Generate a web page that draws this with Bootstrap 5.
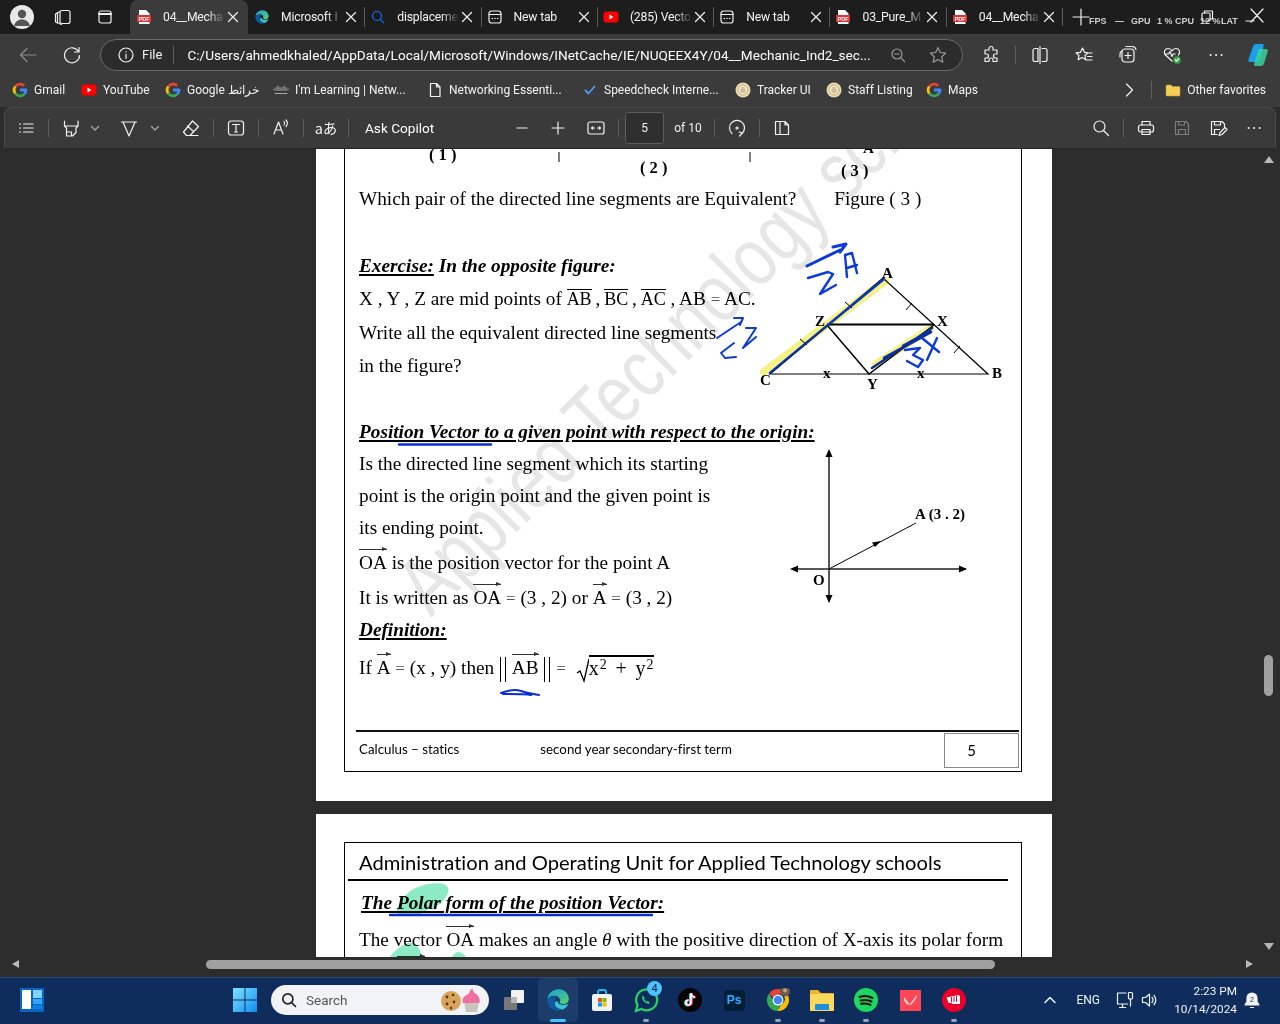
<!DOCTYPE html>
<html lang="en">
<head>
  <meta charset="UTF-8" />
  <meta name="viewport" content="width=device-width, initial-scale=1.0" />
  <title>04__Mechanic_Ind2_sec</title>
  <link rel="stylesheet" href="https://cdn.jsdelivr.net/npm/bootstrap@5.3.3/dist/css/bootstrap.min.css">
  <style>
    html, body { height: 100%; }
    body {
      width: 1280px;
      height: 1024px;
      overflow: hidden;
      background: #2d2d2d;
      color: #f2f2f2;
      font-family: Roboto, "Noto Sans", sans-serif;
      font-size: 12.5px;
    }
    .ico { display: block; fill: none; stroke: currentColor; stroke-width: 1.2; stroke-linecap: round; stroke-linejoin: round; flex: none; }
    .ico-12 { width: 12px; height: 12px; }
    .ico-16 { width: 16px; height: 16px; }
    .ico-20 { width: 20px; height: 20px; }

    /* tab strip */
    .tab-strip { height: 34px; background: #1d1d1d; }
    .strip-btn { width: 42px; display: flex; justify-content: center; }
    .avatar { width: 24px; height: 24px; border-radius: 50%; background: #e8e8e8; margin-left: 10px; margin-right: 8px; }
    .edge-tab { width: 116.3px; height: 34px; padding-left: 6px; position: relative; }
    .edge-tab.is-active { background: #3b3b3b; border-radius: 8px 8px 0 0; width: 118px; }
    .edge-tab + .edge-tab:not(.no-sep)::before { content: ""; position: absolute; left: 0; top: 7px; height: 20px; width: 1px; background: #5a5a5a; }
    .tab-title { width: 62px; margin-left: 11px; white-space: nowrap; overflow: hidden; font-size: 12.2px; letter-spacing: -.2px; -webkit-mask-image: linear-gradient(to right, #000 72%, transparent); mask-image: linear-gradient(to right, #000 72%, transparent); }
    .tab-close { margin-left: 2px; }
    .perf-overlay { position: absolute; top: 15px; left: 1089px; font-size: 9px; font-weight: 700; color: #cfcfcf; font-family: "Liberation Sans", sans-serif; white-space: nowrap; }
    .perf-overlay span { position: absolute; top: 0; }
    .perf-gpu { left: 42px; } .perf-dash { left: 26px; } .perf-one { left: 68px; }
    .perf-cpu { left: 86px; } .perf-twelve { left: 111px; } .perf-lat { left: 132px; }
    .cap-restore { left: 1199px; top: 8px; }
    .cap-close { left: 1245px; top: 6px; }

    /* address and favorites */
    .addr-row { height: 38px; background: #3b3b3b; padding-top: 4px; }
    .nav-back { width: 56px; color: #8c8c8c; }
    .nav-reload { width: 32px; }
    .addr-pill { width: 863px; height: 32px; border: 1px solid #6a6a6a; border-radius: 16px; background: #2c2c2c; margin-left: 12px; padding-left: 17px; }
    .addr-file { font-size: 13px; margin-left: 8px; }
    .addr-sep { margin: 0 13px 0 11px; }
    .addr-url { font-size: 13.6px; color: #fff; white-space: nowrap; }
    .addr-dim { color: #9a9a9a; }
    .addr-star { margin: 0 14px 0 22px; }
    .addr-ext { margin-left: 18px; }
    .addr-sep-ext { margin: 0 14px; }
    .addr-more { margin-right: 19px; }
    .vsep { width: 1px; height: 18px; background: #5f5f5f; flex: none; }
    .fav-row { height: 35px; background: #3b3b3b; padding-left: 12px; padding-right: 14px; font-size: 12px; }
    .fav-grid { display: grid; grid-template-columns: 69px 84px 108px 154px 155px 153px 91px 100px 80px; }
    .fav-item { display: flex; align-items: center; gap: 6px; white-space: nowrap; }
    .fav-sep { margin: 0 13px 0 14px; }

    /* pdf toolbar */
    .pdf-bar { height: 42px; background: #3a3a3a; border: 1px solid #4a4a4a; border-bottom: 1px solid #262626; border-radius: 8px 8px 0 0; margin: 0 4px; padding-left: 10px; font-size: 13px; }
    .tb-btn { width: 22px; display: flex; justify-content: center; flex: none; }
    .tb-chev { width: 16px; display: flex; justify-content: center; flex: none; color: #aaa; }
    .tb-sep { margin: 0 11px; }
    .m5 { margin-left: 5px; } .m7 { margin-left: 7px; } .m15 { margin-left: 15px; } .m16 { margin-left: 16px; } .m17 { margin-left: 17px; }
    .tb-aa { font-size: 14.5px; font-family: "Noto Sans CJK JP", sans-serif; white-space: nowrap; }
    .tb-ask { margin-left: 5px; font-size: 13.6px; color: #fff; white-space: nowrap; }
    .tb-minus { margin-left: 80px; }
    .tb-plus { margin-left: 20px; }
    .tb-fit { margin-left: 20px; }
    .tb-sep-page { margin: 0 6px 0 12px; }
    .page-box { width: 39px; height: 32px; background: #2f2f2f; border: 1px solid #5c5c5c; border-radius: 3px; font-size: 12px; }
    .tb-of { margin-left: 10px; font-size: 12px; white-space: nowrap; }
    .tb-sep-12 { margin: 0 12px; }
    .tb-save { margin-left: 16px; color: #7c7c7c; }
    .tb-more { margin: 0 11px 0 16px; }

    /* viewer */
    .viewer { height: 808px; position: relative; overflow: hidden; background: #2d2d2d; }
    .doc-page { width: 736px; margin-left: 316px; background: #fff; position: relative; overflow: hidden; color: #000; font-family: "Liberation Serif", "Times New Roman", serif; font-size: 19.25px; }
    .page-one { height: 652px; margin-bottom: 13px; }
    .page-two { height: 200px; padding: 28px 30px 0 28px; }
    .page-frame { position: relative; border: 1px solid #000; margin: 0 30px 0 28px; height: 623px; border-top: 0; padding-left: 14px; }
    .page-two .page-frame { margin: 0; height: 300px; border-top: 1px solid #000; }
    .watermark { position: absolute; left: 0; top: 0; }
    .fig-strip { height: 33px; display: block; margin-left: -14px; }
    .doc-text { flex: 1; min-width: 0; }
    .dl { height: 33px; line-height: 33px; white-space: nowrap; position: relative; }
    .dl-34 { height: 34px; line-height: 34px; }
    .dl-32 { height: 32px; line-height: 32px; }
    .dl-31 { height: 31px; line-height: 31px; }
    .dl-40 { height: 40px; line-height: 40px; }
    .dl-30 { height: 30px; line-height: 30px; }
    .dl-42 { height: 42px; line-height: 42px; }
    .after-gap { margin-top: 34px; }
    .after-gap-33 { margin-top: 33px; }
    .doc-head { font-weight: 700; font-style: italic; text-decoration: underline; text-decoration-thickness: 2px; text-underline-offset: 2px; }
    .doc-head-plain { font-weight: 700; font-style: italic; }
    .figure-gap { margin-left: 38px; }
    .doc-fig { display: block; overflow: visible; flex: none; }
    .over { display: inline-block; line-height: 1.05; border-top: 1px solid #000; font-size: 18px; }
    .eq { font-size: 17px; color: #555; }
    .vec { display: inline-block; position: relative; line-height: 1; }
    .vec::before { content: ""; position: absolute; left: 0; right: 0; top: -4px; border-top: 1px solid #333; }
    .vec::after { content: ""; position: absolute; right: 0; top: -6px; border-left: 5px solid #333; border-top: 2.5px solid transparent; border-bottom: 2.5px solid transparent; }
    .norm-bar { display: inline-block; width: 6px; height: 25px; border-left: 1px solid #000; border-right: 1px solid #000; vertical-align: middle; margin: 0 1px; }
    .root-sign { display: inline-block; vertical-align: middle; margin-left: 10px; }
    .root-body { display: inline-block; border-top: 2px solid #000; line-height: 1.12; letter-spacing: .9px; word-spacing: 2px; font-size: 20px; position: relative; top: 1px; }
    .root-body sup { font-size: 14px; top: -.45em; }
    .page-rule { height: 2px; background: #111; position: absolute; left: 11px; right: 2px; bottom: 39px; }
    .page-foot { height: 40px; position: absolute; left: 14px; right: 2px; bottom: 1px; font: 13.3px "Lato", sans-serif; font-variant-ligatures: none; }
    .page-foot span { margin-bottom: 2px; }
    .page-num { width: 75px; height: 35px; border: 1px solid #8a8a8a; font-size: 15px; padding-right: 20px; }
    .foot-mid { margin-left: 81px; }
    .unit-head { height: 36px; font: 20.15px/39px "Lato", sans-serif; font-variant-ligatures: none; white-space: nowrap; }
    .unit-rule { height: 2px; background: #000; margin: 0 13px 0 -11px; }
    .polar-head { font-size: 19.3px; margin-left: 2px; height: 44px; line-height: 44px; white-space: nowrap; }
    .polar-line { font-size: 19.2px; height: 30px; line-height: 30px; white-space: nowrap; }
    .polar-norm { padding-left: 25px; }

    .ink { position: absolute; left: 0; top: 0; pointer-events: none; }
    .ink-blend { mix-blend-mode: multiply; }
    .scroll-v { position: absolute; right: 4px; top: 0; bottom: 0; width: 14px; background: #2d2d2d; color: #b8b8b8; }
    .scroll-thumb-v { position: absolute; left: 2px; top: 506px; width: 9px; height: 41px; border-radius: 5px; background: #a0a0a0; }
    .scroll-up { position: absolute; left: 1px; top: 6px; }
    .scroll-down { position: absolute; left: 1px; bottom: 6px; }

    .hscroll { height: 20px; background: #2d2d2d; position: relative; border-radius: 0 0 8px 8px; margin: 0 4px; }
    .hscroll-thumb { position: absolute; left: 202px; top: 3px; width: 789px; height: 9px; border-radius: 5px; background: #a0a0a0; }
    .hs-arrow { position: absolute; top: 3px; width: 0; height: 0; border-top: 4.5px solid transparent; border-bottom: 4.5px solid transparent; }
    .hs-left { left: 8px; border-right: 7px solid #b8b8b8; }
    .hs-right { left: 1242px; border-left: 7px solid #b8b8b8; }

    /* taskbar */
    .taskbar { height: 47px; background: #0e2d5d; border-top: 1px solid #274a78; padding-bottom: 2px; position: relative; color: #f2f2f2; font-size: 12px; }
    .tray-widgets { margin-left: 20px; }
    .tray-start { margin-left: 189px; }
    .search-pill { width: 218px; height: 30px; border-radius: 15px; background: #f1f3f6; color: #555; font-size: 13.5px; margin-left: 14px; padding-left: 9px; }
    .search-ico { color: #222; stroke-width: 1.5; width: 18px; height: 18px; }
    .task-view { margin-left: 3px; }
    .task-btn { width: 44px; height: 44px; display: flex; align-items: center; justify-content: center; position: relative; flex: none; }
    .task-btn.is-open::after { content: ""; position: absolute; bottom: 0; left: 19px; width: 6px; height: 3px; border-radius: 2px; background: #9aa7b8; }
    .task-btn.is-active { background: #1c3c69; border-radius: 5px; width: 40px; margin: 0 2px; }
    .task-btn.is-active::after { content: ""; position: absolute; bottom: 0; left: 12px; width: 16px; height: 3px; border-radius: 2px; background: #4cc2ff; }
    .wa-badge { position: absolute; left: 23px; top: 3px; width: 15px; height: 15px; border-radius: 50%; background: #4cc2ff; color: #10243f; font-size: 11px; line-height: 15px; text-align: center; }
    .ps-tile { width: 21px; height: 21px; border-radius: 4px; background: #001e36; color: #31a8ff; font: 700 12px/21px "Liberation Sans", sans-serif; text-align: center; }
    .tray-eng { margin-left: 19px; }
    .tray-net { margin-left: 15px; }
    .tray-vol { margin-left: 5px; }
    .clock { text-align: right; line-height: 18px; font-size: 11.8px; width: 72px; margin-left: 5px; }
    .tray-bell { margin: 0 18px 0 5px; }
  </style>
</head>
<body>

  <svg width="0" height="0" class="position-absolute">
    <defs>
      <linearGradient id="edgeA" x1="0" y1="0" x2="1" y2="1"><stop offset="0" stop-color="#1b9de2"/><stop offset="1" stop-color="#54d36a"/></linearGradient>
      <symbol id="i-x" viewBox="0 0 12 12"><path d="M1.500 1.500l9 9M10.500 1.500l-9 9"/></symbol>
      <symbol id="i-pdf" viewBox="0 0 16 16"><path fill="#fff" stroke="none" d="M3 1h7l3.500 3.500V15H3z"/><rect x="1" y="6" width="14" height="7" fill="#e03131" stroke="none"/><text x="8" y="11.600" font-size="5.600" font-weight="700" text-anchor="middle" fill="#fff" stroke="none" font-family="Liberation Sans">PDF</text></symbol>
      <symbol id="i-edge" viewBox="0 0 24 24"><path fill="url(#edgeA)" stroke="none" d="M2 11.500C3 5.500 7.500 2 12.500 2c5.800 0 9.500 4.500 9.500 9 0 2.800-2.200 4.700-5 4.700-2 0-3.500-.7-3.500-1.600 0-.5.500-.7.500-1.600C14 9.800 11.500 8 9 8c-3.500 0-6 1.500-7 3.500z"/><path fill="#0c59a4" stroke="none" d="M2 11.500C2 17.500 6.500 22 12 22c1.800 0 3.500-.5 4.800-1.300-4 .8-8.300-1.500-8.300-6 0-2 1-3.800 2.700-4.700-.8-1-1.800-1.500-3-1.500C5 8.500 2.500 10 2 11.500z"/><path fill="#37c4d0" stroke="none" d="M9 15c0 4 4.500 6 7.800 5.700 2.500-1.400 4.200-3.300 5-5.700-1 1-2.800 1.600-4.800 1.600-3.500 0-5.500-1.600-5.500-3.600-1.500.3-2.500 1-2.500 2z"/></symbol>
      <symbol id="i-search" viewBox="0 0 16 16"><circle cx="7" cy="7" r="4.500"/><path d="M10.300 10.300l3.500 3.500"/></symbol>
      <symbol id="i-newtab" viewBox="0 0 16 16"><rect x="2" y="2" width="12" height="12" rx="2.500"/><path d="M2 5.500h12M5 9.500h.6M7.700 9.500h.6M10.400 9.500h.6"/></symbol>
      <symbol id="i-yt" viewBox="0 0 16 16"><rect x="0.500" y="2.500" width="15" height="11" rx="3" fill="#f00" stroke="none"/><path d="M6.500 5.500v5l4-2.500z" fill="#fff" stroke="none"/></symbol>
      <symbol id="i-g" viewBox="0 0 16 16"><g fill="none" stroke-width="2.800" stroke-linecap="butt"><path stroke="#ea4335" d="M3.300 4.500A6 6 0 0 1 12.200 3.700"/><path stroke="#fbbc05" d="M3.300 4.500A6 6 0 0 0 3.300 11.500"/><path stroke="#34a853" d="M3.300 11.500A6 6 0 0 0 12.200 12.300"/><path stroke="#4285f4" d="M12.200 12.300A6 6 0 0 0 14 8H8"/></g></symbol>
      <symbol id="i-seal" viewBox="0 0 16 16"><circle cx="8" cy="8" r="7.500" fill="#e9dcae" stroke="none"/><circle cx="8" cy="8" r="5" fill="#f5efd8" stroke="#b79d5e" stroke-width=".8"/><path d="M5.500 8h5M6 10h4M6.500 6h3" stroke="#9c8344" stroke-width=".9"/></symbol>
      <symbol id="i-star" viewBox="0 0 20 20"><path d="M10 2.500l2.300 5 5.400.6-4 3.700 1.100 5.400L10 14.500l-4.800 2.700 1.100-5.400-4-3.700 5.400-.6z"/></symbol>
    </defs>
  </svg>

  <!-- tabs -->
  <div class="tab-strip d-flex align-items-center position-relative">
    <div class="avatar d-flex align-items-end justify-content-center overflow-hidden">
      <svg width="24" height="24" viewBox="0 0 24 24"><circle cx="12" cy="9" r="4.200" fill="#555"/><path d="M4 21c1-5 5-6.500 8-6.500s7 1.500 8 6.500z" fill="#555"/></svg>
    </div>
    <div class="strip-btn"><svg class="ico ico-20" viewBox="0 0 20 20"><rect x="7" y="3.500" width="10" height="13" rx="2"/><path d="M7 4.500L4.500 5.800v10l4 1.700M4.500 5.800L2.500 7v8l2 1"/></svg></div>
    <div class="strip-btn"><svg class="ico ico-16" viewBox="0 0 16 16"><rect x="2" y="2" width="12" height="12" rx="2"/><path d="M2 5h12" stroke-width="2.200"/></svg></div>
    <div class="edge-tab is-active d-flex align-items-center ms-1"><svg class="ico ico-16"><use href="#i-pdf"/></svg><span class="tab-title">04__Mecha</span><svg class="ico ico-12 tab-close"><use href="#i-x"/></svg></div>
    <div class="edge-tab no-sep d-flex align-items-center"><svg class="ico ico-16"><use href="#i-edge"/></svg><span class="tab-title">Microsoft I</span><svg class="ico ico-12 tab-close"><use href="#i-x"/></svg></div>
    <div class="edge-tab d-flex align-items-center"><svg class="ico ico-16 text-primary"><use href="#i-search"/></svg><span class="tab-title">displaceme</span><svg class="ico ico-12 tab-close"><use href="#i-x"/></svg></div>
    <div class="edge-tab d-flex align-items-center"><svg class="ico ico-16"><use href="#i-newtab"/></svg><span class="tab-title">New tab</span><svg class="ico ico-12 tab-close"><use href="#i-x"/></svg></div>
    <div class="edge-tab d-flex align-items-center"><svg class="ico ico-16"><use href="#i-yt"/></svg><span class="tab-title">(285) Vecto</span><svg class="ico ico-12 tab-close"><use href="#i-x"/></svg></div>
    <div class="edge-tab d-flex align-items-center"><svg class="ico ico-16"><use href="#i-newtab"/></svg><span class="tab-title">New tab</span><svg class="ico ico-12 tab-close"><use href="#i-x"/></svg></div>
    <div class="edge-tab d-flex align-items-center"><svg class="ico ico-16"><use href="#i-pdf"/></svg><span class="tab-title">03_Pure_M</span><svg class="ico ico-12 tab-close"><use href="#i-x"/></svg></div>
    <div class="edge-tab d-flex align-items-center"><svg class="ico ico-16"><use href="#i-pdf"/></svg><span class="tab-title">04__Mecha</span><svg class="ico ico-12 tab-close"><use href="#i-x"/></svg></div>
    <div class="vsep"></div>
    <svg class="ico ico-20 ms-2"><path d="M10 2v16M2 10h16"/></svg>
    <!-- game perf counter drawn over the caption buttons -->
    <div class="perf-overlay">
      <span>FPS</span><span class="perf-dash">—</span><span class="perf-gpu">GPU</span><span class="perf-one">1 %</span><span class="perf-cpu">CPU</span><span class="perf-twelve">12 %</span><span class="perf-lat">LAT</span>
    </div>
    <svg class="ico ico-16 position-absolute cap-restore"><rect x="3" y="5" width="8" height="8" rx="1"/><path d="M5.500 5V3h8v8h-2"/></svg>
    <svg class="ico ico-20 position-absolute cap-close"><path d="M6 3l12 13M18 3L6 16M1 15h8"/></svg>
  </div>

  <!-- address bar -->
  <div class="addr-row d-flex align-items-center">
    <div class="nav-back d-flex justify-content-center"><svg class="ico ico-20"><path d="M18 10H3M9 3.500L2.500 10 9 16.500"/></svg></div>
    <div class="nav-reload d-flex justify-content-center"><svg class="ico ico-20"><path d="M16.500 6.500A7.500 7.500 0 1 0 17.500 10.500M17 2.500v4.500h-4.500"/></svg></div>
    <div class="addr-pill d-flex align-items-center">
      <svg class="ico ico-16"><circle cx="8" cy="8" r="7"/><path d="M8 7.300v4M8 4.800v.3"/></svg>
      <span class="addr-file">File</span>
      <div class="vsep addr-sep"></div>
      <span class="addr-url">C:/Users/ahmedkhaled/AppData/Local/Microsoft/Windows/INetCache/IE/NUQEEX4Y/04__Mechanic_Ind2_sec...</span>
      <svg class="ico ico-16 ms-auto addr-dim"><circle cx="7" cy="7" r="5"/><path d="M11 11l3.500 3.500M4.700 7h4.600"/></svg>
      <svg class="ico ico-20 addr-dim addr-star"><use href="#i-star"/></svg>
    </div>
    <svg class="ico ico-20 addr-ext"><path d="M8 3.500a2 2 0 0 1 4 0V5h4v4h-1.500a2 2 0 0 0 0 4H16v3.500h-4V15a2 2 0 0 0-4 0v1.500H4V13h1.500a2 2 0 0 0 0-4H4V5h4z"/></svg>
    <div class="vsep addr-sep-ext"></div>
    <svg class="ico ico-20 me-4"><path d="M8 3.500H5a2 2 0 0 0-2 2v9a2 2 0 0 0 2 2h3zM12 3.500h3a2 2 0 0 1 2 2v9a2 2 0 0 1-2 2h-3M10 1.500v17"/></svg>
    <svg class="ico ico-20 me-4"><path d="M8.500 3l2 4.300 3.500.5-3 2.700.8 4.300L8 12.600 4.200 14.800 5 10.500 2 7.800l4.500-.5zM13 8h5M13.500 11.500H18M12.500 15H18"/></svg>
    <svg class="ico ico-20 me-4"><rect x="4" y="4" width="12" height="13" rx="3"/><path d="M4 6c-1.500.500-2 1.500-2 3v3M8 1.500h6a4 4 0 0 1 4 3M10 7.500v6M7 10.500h6"/></svg>
    <svg class="ico ico-20 me-4"><path d="M10 16L3.500 10C1 7 3 3.500 6 3.500c2 0 3.500 1.500 4 2.500.5-1 2-2.500 4-2.500 3 0 5 3.500 2.500 6.500M2.500 9h4l1.500-2.500 2 5 1.200-2.500h2"/><circle cx="15" cy="15" r="3.800" fill="#3fa34d" stroke="none"/><path d="M13.500 15l1.100 1.100 1.900-2.100" stroke="#fff"/></svg>
    <svg class="ico ico-20 addr-more"><path d="M4.500 10h.2M10 10h.2M15.500 10h.2" stroke-width="1.800"/></svg>
    <svg width="26" height="26" viewBox="0 0 26 26"><path fill="#1aa0e8" d="M11 2h6c1 0 1.500.5 1.800 1.500L15 17c-.500 1.800-1.800 3-3.500 3H5c-1.200 0-2-1-1.600-2.200L8 4.500C8.500 3 9.500 2 11 2z"/><path fill="#38d39f" d="M15 7h6c1.500 0 2.200 1 1.800 2.300l-3.500 11.500C18.800 23 17 24 15.500 24h-5c-1.200 0-1.800-1-1.400-2l4-13.200c.3-1 1-1.800 1.900-1.800z" opacity=".85"/></svg>
  </div>

  <!-- favorites -->
  <div class="fav-row d-flex align-items-center">
    <div class="fav-grid">
      <span class="fav-item"><svg class="ico ico-16"><use href="#i-g"/></svg>Gmail</span>
      <span class="fav-item"><svg class="ico ico-16"><use href="#i-yt"/></svg>YouTube</span>
      <span class="fav-item"><svg class="ico ico-16"><use href="#i-g"/></svg>Google خرائط</span>
      <span class="fav-item"><svg class="ico ico-16" viewBox="0 0 16 16"><path d="M1 7v1M3 5.500v3M5 4v4.500M7 5.500v3M9 5.500v3M11 4v4.500M13 5.500v3M15 7v1M2 11.500h12" stroke="#aaa" stroke-width="1"/></svg>I'm Learning | Netw...</span>
      <span class="fav-item"><svg class="ico ico-16"><path d="M3.500 1.500h6l3.500 3.500v9.500h-9.500zM9.500 1.500V5H13"/></svg>Networking Essenti...</span>
      <span class="fav-item"><svg class="ico ico-16"><path d="M3.500 8.500l3 3 6-7" stroke="#4c9cf0" stroke-width="1.800"/></svg>Speedcheck Interne...</span>
      <span class="fav-item"><svg class="ico ico-16"><use href="#i-seal"/></svg>Tracker UI</span>
      <span class="fav-item"><svg class="ico ico-16"><use href="#i-seal"/></svg>Staff Listing</span>
      <span class="fav-item"><svg class="ico ico-16"><use href="#i-g"/></svg>Maps</span>
    </div>
    <svg class="ico ico-16 ms-auto"><path d="M5.500 2l6 6-6 6"/></svg>
    <div class="vsep fav-sep"></div>
    <span class="fav-item"><svg class="ico ico-16" viewBox="0 0 16 16"><path d="M1 4a1 1 0 0 1 1-1h4l1.500 1.500H14a1 1 0 0 1 1 1V13a1 1 0 0 1-1 1H2a1 1 0 0 1-1-1z" fill="#f6cd5a" stroke="#c89a2c" stroke-width=".6"/></svg>Other favorites</span>
  </div>

  <!-- pdf toolbar -->
  <div class="pdf-bar d-flex align-items-center">
    <div class="tb-btn"><svg class="ico ico-16"><path d="M5.500 4H15M5.500 8H15M5.500 12H15M1.500 4h1M1.500 8h1M1.500 12h1"/></svg></div>
    <div class="vsep tb-sep"></div>
    <div class="tb-btn"><svg class="ico ico-20"><path d="M3.500 3v5l2 2v8h6l3.500-3.500V10l2-2V3M3.500 8h13M5.500 14h5v4"/></svg></div>
    <div class="tb-chev m5"><svg class="ico" width="10" height="10" viewBox="0 0 10 10"><path d="M1.500 3.500L5 7l3.500-3.500"/></svg></div>
    <div class="tb-btn m15"><svg class="ico ico-20"><path d="M2.500 4h15M4 4l6 14 6-14"/></svg></div>
    <div class="tb-chev m7"><svg class="ico" width="10" height="10" viewBox="0 0 10 10"><path d="M1.500 3.500L5 7l3.500-3.500"/></svg></div>
    <div class="tb-btn m17"><svg class="ico ico-20"><path d="M11.500 3l6 5.500-8.500 9H5.500L2.500 14zM6.500 8l6 5.500M6 17.500h11"/></svg></div>
    <div class="vsep tb-sep"></div>
    <div class="tb-btn"><svg class="ico ico-20"><rect x="2.500" y="3" width="15" height="14" rx="2.500"/><path d="M6.500 6.500h7M10 6.500v7.500M8.500 14h3"/></svg></div>
    <div class="vsep tb-sep"></div>
    <div class="tb-btn"><svg class="ico ico-20"><path d="M3 16L7.500 4l4.500 12M4.500 12h6M13 3.500a3 3 0 0 1 0 3.500M15 2a5 5 0 0 1 0 6.500"/></svg></div>
    <div class="vsep tb-sep"></div>
    <div class="tb-btn"><span class="tb-aa">aあ</span></div>
    <div class="vsep tb-sep"></div>
    <span class="tb-ask">Ask Copilot</span>
    <svg class="ico ico-16 tb-minus"><path d="M3 8h10"/></svg>
    <svg class="ico ico-16 tb-plus"><path d="M2 8h12M8 2v12"/></svg>
    <svg class="ico ico-20 tb-fit"><rect x="2" y="4" width="16" height="12" rx="2"/><path d="M5.500 10h3M5.500 10l1.200-1.200M5.500 10l1.200 1.200M14.500 10h-3M14.500 10l-1.200-1.200M14.500 10l-1.200 1.200"/></svg>
    <div class="vsep tb-sep-page"></div>
    <div class="page-box d-flex align-items-center justify-content-center">5</div>
    <span class="tb-of">of 10</span>
    <div class="vsep tb-sep-12"></div>
    <svg class="ico ico-20"><path d="M5 15.500A7.500 7.500 0 1 1 15.500 15M12.500 18l3-3-3.500-1"/><circle cx="10" cy="10" r="1"/></svg>
    <div class="vsep tb-sep-12"></div>
    <svg class="ico ico-20"><path d="M8 3.500H3.500v13H8M8 3.500h5l3.500 3.500v9.500H8zM13 3.500V7h3.500"/></svg>
    <svg class="ico ico-20 ms-auto"><circle cx="8.500" cy="8.500" r="5.500"/><path d="M12.500 12.500l5 5"/></svg>
    <div class="vsep tb-sep-12"></div>
    <svg class="ico ico-20"><rect x="2.500" y="7" width="15" height="7" rx="2"/><path d="M6 7V3.500h8V7M6 11.500h8v5H6z"/></svg>
    <svg class="ico ico-20 tb-save"><path d="M3.500 3.500h10.500l2.500 2.500v10.500h-13zM6.500 3.500V7h6V3.500M6.500 16.500v-5h7v5"/></svg>
    <svg class="ico ico-20 m16"><path d="M9 16.500H3.500v-13h10.500l2.500 2.500v3M6.500 3.500V7h6V3.500M6.500 16.500v-5h5M11 17.500l1-3 5-5 2 2-5 5z"/></svg>
    <svg class="ico ico-20 tb-more"><path d="M4.500 10h.2M10 10h.2M15.500 10h.2" stroke-width="1.800"/></svg>
  </div>

  <!-- document area -->
  <div class="viewer">
    <div class="doc-page page-one">
      <svg class="watermark" width="736" height="652" viewBox="316 149 736 652">
        <text transform="translate(431 618) rotate(-45) scale(.8 1)" font-family="Liberation Sans" font-size="82" fill="#e6e6e6">Applied Technology schools</text>
      </svg>
      <div class="page-frame">
        <svg class="fig-strip" width="678" height="33" viewBox="344 149 678 33" font-family="Liberation Serif" font-weight="700" font-size="16.500" fill="#000">
          <text x="428" y="160">( 1 )</text>
          <text x="639" y="173">( 2 )</text>
          <text x="840" y="176">( 3 )</text>
          <text x="862" y="153" font-size="15">A</text>
          <path d="M558 152v10M749 152v10" stroke="#000" stroke-width="1"/>
        </svg>
        <div class="dl">Which pair of the directed line segments are Equivalent?<span class="figure-gap">Figure ( 3 )</span></div>

        <div class="d-flex after-gap">
          <div class="doc-text">
            <div class="dl"><span class="doc-head">Exercise:</span> <span class="doc-head-plain">In the opposite figure:</span></div>
            <div class="dl dl-34">X , Y , Z are mid points of <span class="over">AB</span>&thinsp;,&thinsp;<span class="over">BC</span>&thinsp;,&thinsp;<span class="over">AC</span> , AB <span class="eq">=</span> AC.</div>
            <div class="dl">Write all the equivalent directed line segments</div>
            <div class="dl">in the figure?</div>
          </div>
          <svg class="doc-fig ms-auto" width="262" height="133" viewBox="759 249 262 133" font-family="Liberation Serif" font-weight="700" font-size="15" fill="#000">
            <path d="M770 374L883 278L988 374z" fill="none" stroke="#000" stroke-width="1.200"/>
            <path d="M827 324.500H934" stroke="#000" stroke-width="2"/>
            <path d="M827 325L869 374L934 325" fill="none" stroke="#000" stroke-width="1.500"/>
            <path d="M845 302l7 6M800 339l7 6M906 310l6-7M954 353l6-7" stroke="#000" stroke-width="1"/>
            <text x="882" y="278">A</text><text x="992" y="378">B</text><text x="760" y="385">C</text>
            <text x="815" y="326">Z</text><text x="937" y="326">X</text><text x="867" y="389">Y</text>
            <text x="823" y="378">x</text><text x="917" y="378">x</text>
          </svg>
        </div>

        <div class="d-flex after-gap-33">
          <div class="doc-text">
            <div class="dl"><span class="doc-head">Position Vector to a given point with respect to the origin:</span></div>
            <div class="dl dl-32">Is the directed line segment which its starting</div>
            <div class="dl dl-32">point is the origin point and the given point is</div>
            <div class="dl dl-31">its ending point.</div>
            <div class="dl dl-40"><span class="vec">OA</span> is the position vector for the point A</div>
            <div class="dl dl-30">It is written as <span class="vec">OA</span> <span class="eq">=</span> (3 , 2) or <span class="vec">A</span> <span class="eq">=</span> (3 , 2)</div>
            <div class="dl dl-34"><span class="doc-head">Definition:</span></div>
            <div class="dl dl-42">If <span class="vec">A</span> <span class="eq">=</span> (x , y) then <span class="norm-bar"></span> <span class="vec">AB</span> <span class="norm-bar"></span> <span class="eq">=</span><svg class="root-sign" width="13" height="26" viewBox="0 0 13 26"><path d="M1 16l3-2 4 10 5-22" fill="none" stroke="#000" stroke-width="1.300"/></svg><span class="root-body">x<sup>2</sup> + y<sup>2</sup></span></div>
          </div>
          <svg class="doc-fig ms-auto" width="232" height="230" viewBox="789 415 232 230" font-family="Liberation Serif" font-weight="700" font-size="15" fill="#000">
            <path d="M794 569H966M829 451V602" stroke="#222" stroke-width="1.500"/>
            <path d="M829 569L916 523" stroke="#000" stroke-width="1"/>
            <path d="M829 449l-3.500 8h7zM829 603l-3.500-8h7zM790 569l8-3.500v7zM967 569l-8-3.500v7zM881 541l-9 1.500 3 4.500z" stroke="none"/>
            <text x="915" y="519">A (3 . 2)</text><text x="813" y="585">O</text>
          </svg>
        </div>

        <div class="page-rule"></div>
        <div class="page-foot d-flex align-items-center">
          <span>Calculus – statics</span>
          <span class="foot-mid">second year secondary-first term</span>
          <div class="page-num d-flex align-items-center justify-content-center ms-auto">5</div>
        </div>
      </div>
    </div>

    <div class="doc-page page-two">
      <div class="page-frame">
        <div class="unit-head">Administration and Operating Unit for Applied Technology schools</div>
        <div class="unit-rule"></div>
        <div class="polar-head"><span class="doc-head">The Polar form of the position Vector:</span></div>
        <div class="polar-line">The vector <span class="vec">OA</span> makes an angle <i>θ</i> with the positive direction of X-axis its polar form</div>
        <div class="polar-line polar-norm"><span class="norm-bar"></span> <span class="vec">OA</span> <span class="norm-bar"></span></div>
      </div>
    </div>

    <!-- handwritten annotations drawn on top of the pdf -->
    <svg class="ink" width="1280" height="808" viewBox="0 149 1280 808" fill="none" stroke-linecap="round" stroke-linejoin="round">
      <g class="ink-blend" stroke="#f4f187" stroke-width="8">
        <path d="M764 372L885 281M876 364L930 329"/>
      </g>
      <g class="ink-blend" fill="#8cebc2">
        <path d="M396 912c4-12 10-18 16-22 8-5 24-8 32-6 7 3 5 10 0 16-5 7-14 8-20 12-6 5-22 6-28 0z"/>
        <path d="M388 960c4-8 12-14 20-17 6-1 12 4 14 14z"/>
        <path d="M451 960c1-5 4-8 8-8s7 4 8 8z"/>
      </g>
      <g stroke="#0c3bd8" stroke-width="2.400">
        <path d="M770 373L828 325" stroke="#0b2f9c"/>
        <path d="M828 325L884 279" stroke="#0b38c0"/>
        <path d="M872 368L932 328M884 358L931 332M903 346L930 331" stroke="#0b2f9c" stroke-width="2.600"/>
        <path d="M807 266L840 250M833 247L846 244L840 252" stroke-width="3"/>
        <path d="M808 278L828 272L833 274L820 294L836 285"/>
        <path d="M847 277L845 255L852 253L857 273M847 268L857 265"/>
        <path d="M717 338L741 322M734 318L743 318L740 325" stroke-width="2"/>
        <path d="M746 328L756 328L743 348L756 337" stroke-width="2"/>
        <path d="M734 343L721 353L725 358L736 357" stroke-width="2"/>
        <path d="M905 350L920 348L913 355L923 360L918 367L907 361"/>
        <path d="M922 338L939 352M937 338L927 360"/>
        <path d="M399 444.500h92" stroke="#0a2fd0"/>
        <path d="M501 693c8-3 14-4 20-2 6 2 12 3 18 4M503 694c10 0 22 0 28 1" stroke="#0a2fd0" stroke-width="2"/>
        <path d="M390 915h262" stroke="#0a2fd0"/>
      </g>
    </svg>

    <div class="scroll-v">
      <svg class="scroll-up" width="12" height="10"><path d="M6 1l5 7H1z" fill="currentColor"/></svg>
      <div class="scroll-thumb-v"></div>
      <svg class="scroll-down" width="12" height="10"><path d="M6 9l5-7H1z" fill="currentColor"/></svg>
    </div>
  </div>

  <div class="hscroll">
    <span class="hs-arrow hs-left"></span>
    <div class="hscroll-thumb"></div>
    <span class="hs-arrow hs-right"></span>
  </div>

  <!-- windows taskbar -->
  <div class="taskbar d-flex align-items-center">
    <svg class="tray-widgets" width="24" height="24" viewBox="0 0 24 24"><rect width="24" height="24" fill="#0b63c4"/><rect x="2" y="2" width="9" height="19" fill="#fff"/><rect x="13" y="2" width="9" height="8" fill="#7fd4fb"/><rect x="13" y="11" width="9" height="5" fill="#34a9f2"/><rect x="13" y="17" width="9" height="4" fill="#0a84e6"/></svg>
    <svg class="tray-start" width="24" height="24" viewBox="0 0 24 24"><defs><linearGradient id="win" x1="0" y1="0" x2="1" y2="1"><stop offset="0" stop-color="#7fe3ff"/><stop offset="1" stop-color="#0f8cf0"/></linearGradient></defs><path fill="url(#win)" d="M0 0h11.500v11.500H0zM12.500 0H24v11.500H12.500zM0 12.500h11.500V24H0zM12.500 12.500H24V24H12.500z"/></svg>
    <div class="search-pill d-flex align-items-center">
      <svg class="ico search-ico"><use href="#i-search"/></svg>
      <span class="ms-2">Search</span>
      <svg class="ms-auto me-2" width="40" height="26" viewBox="0 0 40 26"><circle cx="10" cy="14" r="10" fill="#d9a45b"/><g fill="#5a3618"><circle cx="6" cy="10" r="1.400"/><circle cx="12" cy="8" r="1.300"/><circle cx="13" cy="15" r="1.400"/><circle cx="6" cy="17" r="1.400"/><circle cx="10" cy="21" r="1.200"/></g><path d="M23 15h15l-2 10H25z" fill="#c9c5bd"/><path d="M21.500 16c-1-5 3-8 6-9 1-3 3-5 4-6 0 2 1 4 2 5 3 1 6 5 5 10z" fill="#ef6fa0"/></svg>
    </div>
    <div class="task-btn task-view"><svg width="24" height="24" viewBox="0 0 24 24"><rect x="9" y="2" width="13" height="13" rx="1" fill="#f2f2f2"/><rect x="2" y="9" width="13" height="13" rx="1" fill="#777"/><rect x="9" y="9" width="6" height="6" fill="#b5b5b5"/></svg></div>
    <div class="task-btn is-active"><svg width="26" height="26"><use href="#i-edge"/></svg></div>
    <div class="task-btn"><svg width="24" height="24" viewBox="0 0 24 24"><path d="M8 7V4a2 2 0 0 1 2-2h4a2 2 0 0 1 2 2v3" fill="none" stroke="#25b3f0" stroke-width="2"/><rect x="2" y="6" width="20" height="17" rx="2" fill="#f2f2f2"/><rect x="8" y="10" width="4" height="4" fill="#f25022"/><rect x="12.500" y="10" width="4" height="4" fill="#7fba00"/><rect x="8" y="14.500" width="4" height="4" fill="#00a4ef"/><rect x="12.500" y="14.500" width="4" height="4" fill="#ffb900"/></svg></div>
    <div class="task-btn is-open"><svg width="26" height="26" viewBox="0 0 26 26"><path d="M3 24l1.500-6A10.500 10.500 0 1 1 8.500 22z" fill="none" stroke="#25d366" stroke-width="2.200"/><path d="M9.500 8.500c-1 1.500-.500 4 1.500 6s4.500 3 6 1.500l-2-2-1.500.8-2.500-2.500.8-1.500z" fill="#25d366"/></svg><span class="wa-badge">4</span></div>
    <div class="task-btn"><svg width="24" height="24" viewBox="0 0 24 24"><circle cx="12" cy="12" r="12" fill="#050505"/><path d="M13 5v9.500a2.500 2.500 0 1 1-2.500-2.500M13 5c.3 2.500 1.800 4 4 4.200" fill="none" stroke="#25f4ee" stroke-width="2.200" transform="translate(-.8 .5)"/><path d="M13 5v9.500a2.500 2.500 0 1 1-2.500-2.500M13 5c.3 2.500 1.800 4 4 4.200" fill="none" stroke="#fe2c55" stroke-width="2.200" transform="translate(.8 .2)"/><path d="M13 5v9.500a2.500 2.500 0 1 1-2.500-2.500M13 5c.3 2.500 1.800 4 4 4.200" fill="none" stroke="#fff" stroke-width="1.700"/></svg></div>
    <div class="task-btn"><span class="ps-tile">Ps</span></div>
    <div class="task-btn is-open"><svg width="24" height="24" viewBox="0 0 24 24"><path d="M12 1a11 11 0 0 1 9.500 5.500H12a5.500 5.500 0 0 0-5 3.200L3.300 5.200A11 11 0 0 1 12 1z" fill="#ea4335"/><path d="M21.500 6.500A11 11 0 0 1 11 23l4.800-7a5.500 5.500 0 0 0 .8-9.500z" fill="#fbbc05"/><path d="M3.300 5.200L7.800 14.700A5.500 5.500 0 0 0 15.800 16L11 23A11 11 0 0 1 3.300 5.200z" fill="#34a853"/><circle cx="12" cy="12" r="5.500" fill="#fff"/><circle cx="12" cy="12" r="4.300" fill="#4285f4"/><circle cx="19" cy="3.500" r="5" fill="#6b5a4a"/><circle cx="19" cy="2.500" r="2" fill="#c9a27e"/></svg></div>
    <div class="task-btn is-open"><svg width="24" height="24" viewBox="0 0 24 24"><path d="M0 3a1 1 0 0 1 1-1h7l3 3h12a1 1 0 0 1 1 1v16a1 1 0 0 1-1 1H1a1 1 0 0 1-1-1z" fill="#e8b52e"/><rect y="6" width="24" height="17" rx="1" fill="#fbd85c"/><rect x="5" y="16" width="14" height="6" rx="1" fill="#1f8fdc"/></svg></div>
    <div class="task-btn is-open"><svg width="24" height="24" viewBox="0 0 24 24"><circle cx="12" cy="12" r="12" fill="#1ed760"/><path d="M5.500 9c4.500-1.500 9-1 13 1M6.500 12.500c4-1 7.500-.7 11 1M7 15.800c3.500-.7 6.500-.4 9.500 1" fill="none" stroke="#0c0c0c" stroke-width="2" stroke-linecap="round"/></svg></div>
    <div class="task-btn"><svg width="21" height="21" viewBox="0 0 21 21"><rect width="21" height="21" fill="#ff4655"/><path d="M4 7l6 7.500h-3L4 10.500zM17 7l-5.500 7.500h-2L17 5z" fill="#f3d8d8"/></svg></div>
    <div class="task-btn is-open"><svg width="24" height="24" viewBox="0 0 24 24"><circle cx="12" cy="12" r="12" fill="#ea0029"/><path d="M4.500 9.500l12-2.500 1.500 1v8h-8l-.5-1.500-3 .5z" fill="#fff"/><path d="M9.500 9v5M12 8.500V14M14.500 8v6" stroke="#ea0029" stroke-width="1"/></svg></div>

    <svg class="ico ms-auto" width="14" height="14" viewBox="0 0 14 14"><path d="M2 9.500l5-5 5 5" stroke-width="1.500"/></svg>
    <span class="tray-eng">ENG</span>
    <svg class="ico ico-20 tray-net"><path d="M11 3H2.500v11h10M7.500 14v3M4.500 17.500h6"/><rect x="13.500" y="2.500" width="4" height="6.500" rx="1"/><path d="M15.500 9v7"/></svg>
    <svg class="ico ico-20 tray-vol"><path d="M2.500 7.500v5h3l4 3.500V4l-4 3.500zM12 7.500a3.500 3.500 0 0 1 0 5M14 5.500a6.500 6.500 0 0 1 0 9"/></svg>
    <div class="clock"><div>2:23 PM</div><div>10/14/2024</div></div>
    <svg class="ico ico-20 tray-bell"><path d="M10 3a5 5 0 0 0-5 5v3.500L3 15h14l-2-3.500V8a5 5 0 0 0-5-5zM8.500 17.500h3" fill="#f2f2f2" stroke="#f2f2f2"/><text x="10" y="12" font-size="7" fill="#0e2d5d" stroke="none" text-anchor="middle" font-family="Liberation Sans">2</text></svg>
  </div>

</body>
</html>
